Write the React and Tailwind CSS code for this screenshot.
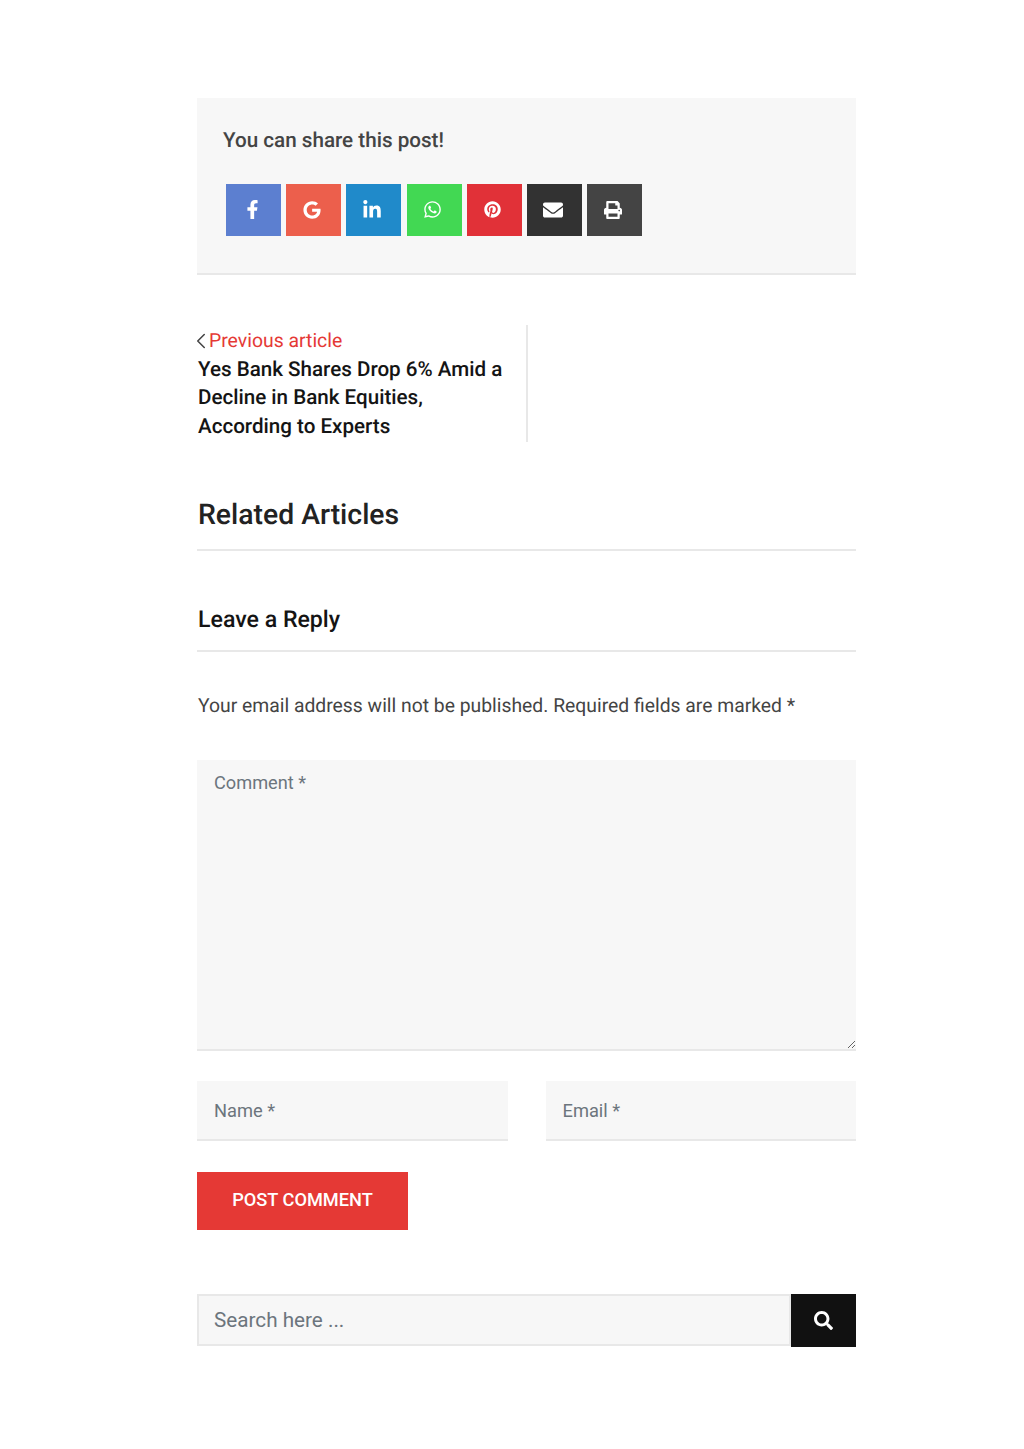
import React from "react";
import { FaFacebookF, FaGoogle, FaLinkedinIn, FaWhatsapp, FaPinterest, FaEnvelope, FaPrint, FaSearch } from "react-icons/fa";
import { ChevronLeft } from "lucide-react";

const shares = [
  { I: FaFacebookF, c: "bg-[#5c7fd0]", s: "text-[19px]" },
  { I: FaGoogle, c: "bg-[#ec5f4c]", s: "text-[18px]" },
  { I: FaLinkedinIn, c: "bg-[#208aca]", s: "text-[20px]" },
  { I: FaWhatsapp, c: "bg-[#42d853]", s: "text-[19px]" },
  { I: FaPinterest, c: "bg-[#e13138]", s: "text-[17px]" },
  { I: FaEnvelope, c: "bg-[#323232]", s: "text-[20px]" },
  { I: FaPrint, c: "bg-[#444444]", s: "text-[18px]" },
];

export default function App() {
  return (
    <div className="w-[1024px] h-[1449px] bg-white font-['Roboto',sans-serif] [text-rendering:geometricPrecision] pt-[98px] pl-[197px]">
      <div className="w-[659px]">
        <div className="h-[177px] bg-[#f7f7f7] border-b-2 border-[#e8e8e8] pt-[30px] pl-[26px]">
          <p className="text-[20.65px] leading-[26px] font-medium text-[#444]">You can share this post!</p>
          <div className="flex gap-[5.2px] mt-[30px] pl-[3px]">
            {shares.map(({ I, c, s }, i) => (
              <div key={i} className={`w-[55px] h-[52px] flex items-center justify-center pr-[3px] pb-[1px] text-white ${c} ${s}`}>
                <I />
              </div>
            ))}
          </div>
        </div>

        <div className="mt-[50px] w-[331px] h-[117px] border-r-2 border-[#e8e8e8] pt-[4px] pl-[1px]">
          <div className="flex items-center h-[24px] text-[19.4px] text-[#e53935]">
            <ChevronLeft className="text-[#444] w-[26px] h-[26px] shrink-0 -ml-[10px] -mr-[5px]" strokeWidth={1.4} />
            <span>Previous article</span>
          </div>
          <p className="text-[20.6px] leading-[28.4px] font-medium text-[#141414] mt-[3px]">
            Yes Bank Shares Drop 6% Amid a<br />Decline in Bank Equities,<br />According to Experts
          </p>
        </div>

        <h2 className="mt-[55px] text-[28.35px] leading-[36px] font-medium text-[#222] pl-[1px] pb-[16px] border-b-2 border-[#e8e8e8]">Related Articles</h2>

        <h3 className="mt-[54px] text-[23.15px] leading-[30px] font-medium text-[#141414] pl-[1px] pb-[15px] border-b-2 border-[#e8e8e8]">Leave a Reply</h3>

        <p className="mt-[41px] text-[19.33px] leading-[26px] text-[#444] pl-[1px]">Your email address will not be published. Required fields are marked *</p>

        <textarea
          placeholder="Comment *"
          className="block mt-[41px] w-[659px] h-[291px] bg-[#f7f7f7] border-b-2 border-[#e8e8e8] px-[17px] py-[11px] text-[18.2px] leading-[24px] text-[#555] placeholder:text-[#6c757d] outline-none"
        />

        <div className="flex justify-between mt-[30px]">
          <input placeholder="Name *" className="w-[310.5px] h-[60px] bg-[#f7f7f7] border-b-2 border-[#e8e8e8] px-[17px] text-[18.3px] placeholder:text-[#6c757d] outline-none" />
          <input placeholder="Email *" className="w-[310.5px] h-[60px] bg-[#f7f7f7] border-b-2 border-[#e8e8e8] px-[17px] text-[18.3px] placeholder:text-[#6c757d] outline-none" />
        </div>

        <button className="block mt-[31px] w-[211px] h-[58px] pb-[2px] bg-[#e53935] text-white text-[18.2px] font-medium uppercase">Post Comment</button>

        <div className="flex mt-[64px] h-[53px]">
          <input placeholder="Search here ..." className="flex-1 min-w-0 h-[52px] bg-[#f7f7f7] border-2 border-[#e8e8e8] px-[15px] text-[20.7px] placeholder:text-[#6c757d] outline-none" />
          <button className="w-[65px] h-[53px] bg-[#111] flex items-center justify-center text-white text-[19px]"><FaSearch /></button>
        </div>
      </div>
    </div>
  );
}
